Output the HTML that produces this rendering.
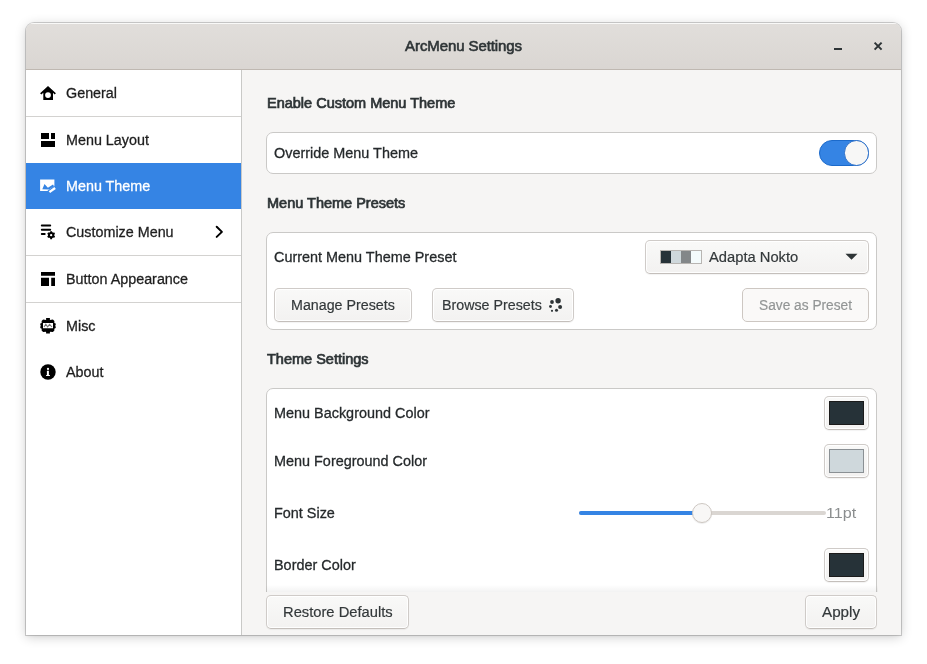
<!DOCTYPE html>
<html><head><meta charset="utf-8">
<style>
*{box-sizing:border-box;margin:0;padding:0}
html,body{width:927px;height:664px;overflow:hidden;background:#fff}
body{font-family:"Liberation Sans",sans-serif;color:#25292b;position:relative;-webkit-text-stroke:0.3px currentColor}
.abs{position:absolute}
.win{position:absolute;left:26px;top:23px;width:875px;height:612px;border-radius:8px 8px 0 0;background:#f6f5f4;box-shadow:0 0 0 1px rgba(0,0,0,.17),0 1px 3px rgba(0,0,0,.06),0 2px 12px rgba(0,0,0,.2)}
.wclip{position:absolute;left:0;top:0;width:875px;height:612px;border-radius:8px 8px 0 0;overflow:hidden;filter:grayscale(0.0001)}
.title{position:absolute;left:0;top:0;width:875px;height:47px;background:linear-gradient(to top,#dad6d2,#e1dedb);box-shadow:inset 0 1px rgba(255,255,255,.8);border-bottom:1px solid #bfb8b1}
.title .t{-webkit-text-stroke:0.6px currentColor;position:absolute;left:0;width:875px;top:14.4px;text-align:center;font-weight:normal;font-size:15px;letter-spacing:-0.1px;color:#2e3436}
.side{position:absolute;left:0;top:47px;width:216px;height:566px;background:#fff;border-right:1px solid #c9c9c7}
.item{position:absolute;left:0;width:215px;height:46px;font-size:14.5px;color:#1e1e1e}
.item .lbl{position:absolute;left:40px;top:13.8px;font-size:15.5px;transform-origin:0 50%;transform:scaleX(var(--sx,0.925))}
.item svg{position:absolute;left:14px;top:15px}
.sep{position:absolute;left:0;width:215px;height:1px;background:#d3d2d0}
.sel{background:#3584e4;color:#fff}
.h{-webkit-text-stroke:0.7px currentColor;position:absolute;white-space:nowrap;font-weight:normal;font-size:14.5px;letter-spacing:0;margin-top:1.2px;color:#2e3436}
.box{position:absolute;background:#fff;border:1px solid #cac9c7;border-radius:7px}
.txt{position:absolute;margin-top:-0.4px;font-size:15.5px;transform-origin:0 50%;transform:scaleX(var(--sx,0.93));color:#25292b;white-space:nowrap}
.btn{position:absolute;background:linear-gradient(to top,#f3f2f1 2px,#f9f9f8);border:1px solid #cfcbc8;border-bottom-color:#c4bfbb;border-radius:5px;box-shadow:inset 0 0 0 1px rgba(255,255,255,.9),0 1px 1px rgba(0,0,0,.05)}
.content{position:absolute;left:0;top:0}
.btn span{position:absolute;margin-top:-0.2px;white-space:nowrap;font-size:15.5px;transform-origin:0 50%;transform:scaleX(var(--sx,0.92));color:#33383a;-webkit-text-stroke:0.2px currentColor}
</style></head>
<body>
<div class="win"><div class="wclip">
  <div class="title"><div class="t">ArcMenu Settings</div>
    <div class="abs" style="left:808px;top:25px;width:8px;height:2px;background:#2e3436"></div>
    <svg class="abs" style="left:847px;top:18px" width="10" height="10" viewBox="0 0 10 10"><path d="M1.6 1.6L8.6 8.6M8.6 1.6L1.6 8.6" stroke="#2e3436" stroke-width="2" stroke-linecap="butt"/></svg>
  </div>
  <div class="side">
    <div class="item" style="top:0"><svg width="16" height="16" viewBox="0 0 16 16"><path fill-rule="evenodd" d="M8 1.1L0.1 8.3L1.3 9.5L3.3 7.7V15H13V7.7L14.7 9.5L15.9 8.3Z M8 7.2A2.9 2.9 0 1 0 8 13A2.9 2.9 0 1 0 8 7.2Z" fill="#000"/></svg><div class="lbl">General</div></div>
    <div class="sep" style="top:46px"></div>
    <div class="item" style="top:47px"><svg width="16" height="16" viewBox="0 0 16 16"><path d="M1 1H9V7H1Z M11 1H15V7H11Z M1 9H15V15H1Z" fill="#000"/></svg><div class="lbl">Menu Layout</div></div>
    <div class="item sel" style="top:93px"><svg width="16" height="16" viewBox="0 0 16 16"><path d="M0.1 1.6H14.4V13H0.1Z" fill="#fff"/><path d="M2.3 11.2L4.5 6.1L7.9 9.7L13 6.6L14 8.2L9 11.6Z" fill="#3584e4"/><path d="M8.8 14.6L15.6 9.6" stroke="#3584e4" stroke-width="4.4"/><path d="M9.4 14.1L15.1 10" stroke="#fff" stroke-width="2.4"/></svg><div class="lbl">Menu Theme</div></div>
    <div class="item" style="top:139px"><svg width="16" height="16" viewBox="0 0 16 16"><path d="M1.8 1.5H10.2M1.8 5.8H10.2M1.8 9.9H4.7" stroke="#000" stroke-width="2" stroke-linecap="round"/><path fill-rule="evenodd" fill="#000" d="M12.10 14.21 L12.10 15.14 L10.20 15.14 L10.20 14.21 L8.98 13.50 L8.17 13.97 L7.22 12.32 L8.03 11.86 L8.03 10.44 L7.22 9.98 L8.17 8.33 L8.98 8.80 L10.20 8.09 L10.20 7.16 L12.10 7.16 L12.10 8.09 L13.32 8.80 L14.13 8.33 L15.08 9.98 L14.27 10.44 L14.27 11.86 L15.08 12.32 L14.13 13.97 L13.32 13.50Z M11.15 10.00A1.15 1.15 0 1 0 11.15 12.30A1.15 1.15 0 1 0 11.15 10.00Z"/></svg><div class="lbl">Customize Menu</div>
      <svg style="left:189px;top:15px" width="10" height="16" viewBox="0 0 10 16"><path d="M1.7 2.7L6.9 7.9L1.7 12.9" fill="none" stroke="#000" stroke-width="2" stroke-linecap="round" stroke-linejoin="round"/></svg></div>
    <div class="sep" style="top:185px"></div>
    <div class="item" style="top:186px"><svg width="16" height="16" viewBox="0 0 16 16"><path d="M1 1.1H15V4.7H1Z M1 6.8H9V14.9H1Z M11.2 6.8H15V14.9H11.2Z" fill="#000"/></svg><div class="lbl">Button Appearance</div></div>
    <div class="sep" style="top:232px"></div>
    <div class="item" style="top:233px"><svg width="16" height="16" viewBox="0 0 16 16"><path fill-rule="evenodd" fill="#000" d="M6.1 0.1H9.9V1.9L12.9 1.6L14.4 3.1L14.3 4.9L15.7 5.6V7.2L15 7.8L15.7 8.4V10L14.3 10.7L14.4 12.5L12.9 14L9.9 13.7V15.5H6.1V13.7L3.1 14L1.6 12.5L1.7 10.7L0.3 10V8.4L1 7.8L0.3 7.2V5.6L1.7 4.9L1.6 3.1L3.1 1.6L6.1 1.9Z M3 5H13V10.2H3Z"/><path d="M4 9L5.8 6.3L7.6 8.8L9.6 6.3L12 9" stroke="#777" stroke-width="1.1" fill="none"/></svg><div class="lbl">Misc</div></div>
    <div class="item" style="top:279px"><svg width="16" height="16" viewBox="0 0 16 16"><circle cx="8" cy="8" r="7.7" fill="#000"/><circle cx="8" cy="4.9" r="1.1" fill="#fff"/><path d="M6.9 6.8H8.9V10.9H9.9V11.9H6.1V10.9H6.9V7.8H6.9Z" fill="#fff"/></svg><div class="lbl">About</div></div>
  </div>

  <div class="content">
    <div class="h" style="left:241px;top:71px">Enable Custom Menu Theme</div>
    <div class="box" style="left:240px;top:109px;width:611px;height:42px">
      <div class="txt" style="left:7px;top:11px">Override Menu Theme</div>
      <div class="abs" style="left:552px;top:7px;width:50px;height:26px;border-radius:13px;background:#3584e4;border:1px solid #1b6acb"></div>
      <div class="abs" style="left:576.5px;top:7px;width:25.5px;height:25.5px;border-radius:50%;background:#f7f7f6;border:1px solid #2a6fc9"></div>
    </div>
    <div class="h" style="left:241px;top:171px">Menu Theme Presets</div>
    <div class="box" style="left:240px;top:209px;width:611px;height:98px">
      <div class="txt" style="left:7px;top:15px">Current Menu Theme Preset</div>
      <div class="btn" style="left:378px;top:7px;width:224px;height:34px">
        <div class="abs" style="left:14px;top:9px;width:42px;height:14px;border:1px solid #b8b5b2;display:flex">
          <div style="flex:1;background:#263238"></div><div style="flex:1;background:#cfd8dc"></div><div style="flex:1;background:#838789"></div><div style="flex:1;background:#f4fbfc"></div>
        </div>
        <span style="left:63px;top:7px;--sx:0.95">Adapta Nokto</span>
        <svg class="abs" style="left:199px;top:12px" width="13" height="8" viewBox="0 0 13 8"><path d="M0.5 0.8H12.5L6.5 6.8Z" fill="#2e3436"/></svg>
      </div>
      <div class="btn" style="left:7px;top:55px;width:138px;height:34px"><span style="left:16px;top:7px">Manage Presets</span></div>
      <div class="btn" style="left:165px;top:55px;width:142px;height:34px"><span style="left:9px;top:7px">Browse Presets</span>
        <svg class="abs" style="left:114px;top:7.3px" width="18" height="18" viewBox="0 0 18 18"><circle cx="11.1" cy="4.8" r="2.7" fill="#2e3436"/><circle cx="5" cy="6" r="1.9" fill="#2e3436"/><circle cx="3.5" cy="10.5" r="1.4" fill="#2e3436"/><circle cx="13.1" cy="11" r="2" fill="#2e3436"/><circle cx="9.5" cy="14.3" r="1.5" fill="#2e3436"/><circle cx="5" cy="14.8" r="1.1" fill="#2e3436"/></svg>
      </div>
      <div class="btn" style="left:475px;top:55px;width:127px;height:34px;box-shadow:none;border-color:#cdc7c2;background:#faf9f8"><span style="left:16px;top:7px;color:#929595;--sx:0.885">Save as Preset</span></div>
    </div>
    <div class="h" style="left:241px;top:327px">Theme Settings</div>
    <div class="clip" style="position:absolute;left:240px;top:365px;width:612px;height:204px;overflow:hidden">
      <div class="box" style="left:0;top:0;width:611px;height:260px">
        <div class="txt" style="left:7px;top:15px">Menu Background Color</div>
        <div class="btn" style="left:557px;top:7px;width:45px;height:34px"><div class="abs" style="left:4px;top:4px;width:35px;height:24px;background:#263238;border:1px solid #1a1a1a"></div></div>
        <div class="txt" style="left:7px;top:63px">Menu Foreground Color</div>
        <div class="btn" style="left:557px;top:55px;width:45px;height:34px"><div class="abs" style="left:4px;top:4px;width:35px;height:24px;background:#cfd8dc;border:1px solid #8a9094"></div></div>
        <div class="txt" style="left:7px;top:115px">Font Size</div>
        <div class="abs" style="left:312px;top:122px;width:247px;height:4px;border-radius:2px;background:#dad6d2"></div>
        <div class="abs" style="left:312px;top:122px;width:124px;height:4px;border-radius:2px;background:#3584e4"></div>
        <div class="abs" style="left:425px;top:114px;width:20px;height:20px;border-radius:50%;background:#f8f7f6;border:1px solid #cdc7c2;box-shadow:0 1px 1px rgba(0,0,0,.08)"></div>
        <div class="txt" style="left:559px;top:115px;color:#8b8e8f;--sx:1.04;-webkit-text-stroke:0">11pt</div>
        <div class="txt" style="left:7px;top:167px">Border Color</div>
        <div class="btn" style="left:557px;top:159px;width:45px;height:34px"><div class="abs" style="left:4px;top:4px;width:35px;height:24px;background:#263238;border:1px solid #1a1a1a"></div></div>
      </div>
      <div class="abs" style="left:0;top:197px;width:612px;height:7px;background:linear-gradient(to bottom,rgba(0,0,0,0),rgba(0,0,0,.05))"></div>
    </div>
    <div class="btn" style="left:240px;top:572px;width:143px;height:34px"><span style="left:16px;top:7px;--sx:0.95">Restore Defaults</span></div>
    <div class="btn" style="left:779px;top:572px;width:72px;height:34px"><span style="left:16px;top:7px;--sx:0.98">Apply</span></div>
  </div>
</div></div>
</body></html>
